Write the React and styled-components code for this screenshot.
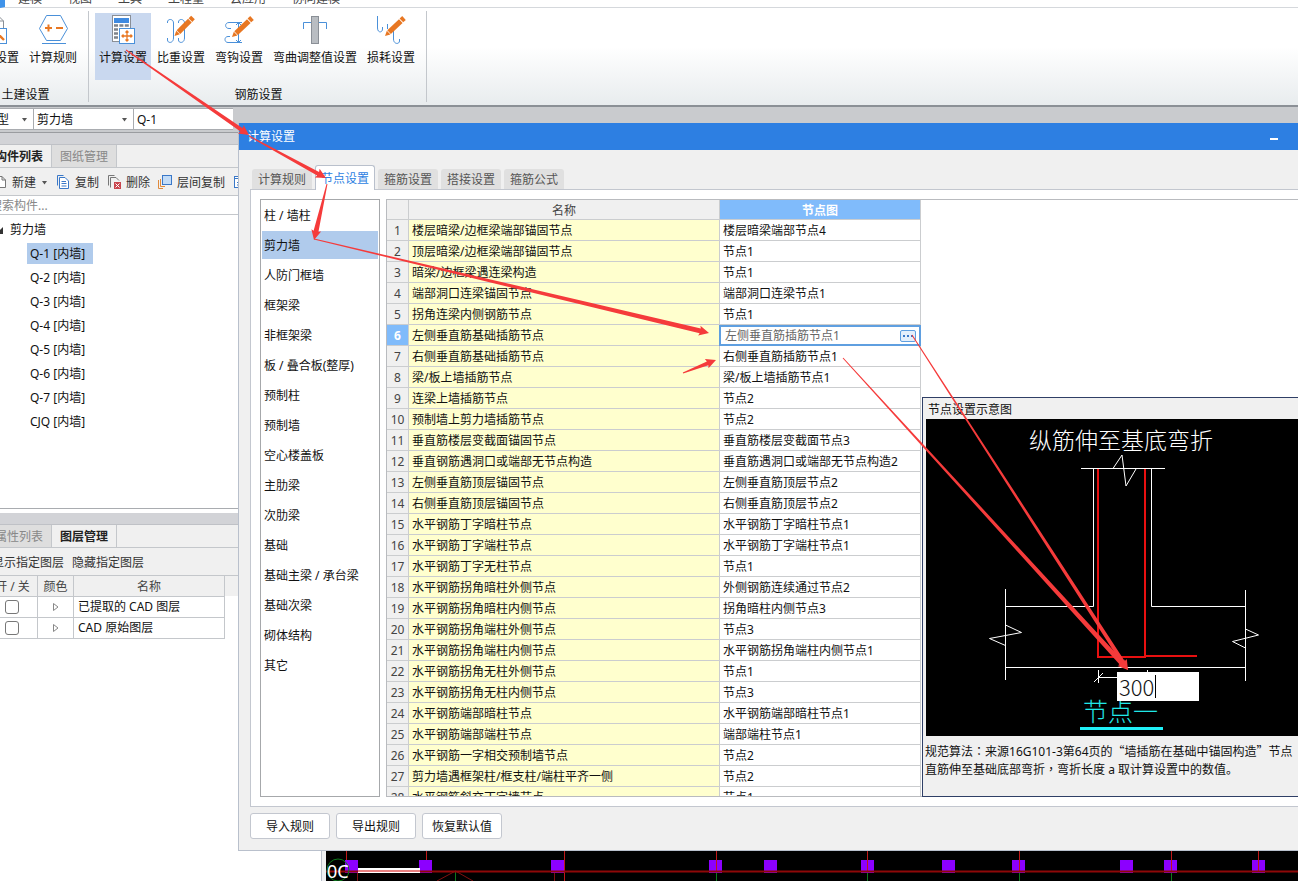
import React, { useState } from 'react';
import styled, { createGlobalStyle, css } from 'styled-components';


const sans = '"Noto Sans", "Noto Sans CJK SC", sans-serif';

const menus = ['建模', '视图', '工具', '工程量', '云应用', '协同建模'];

const walls = ['Q-1 [内墙]', 'Q-2 [内墙]', 'Q-3 [内墙]', 'Q-4 [内墙]', 'Q-5 [内墙]', 'Q-6 [内墙]', 'Q-7 [内墙]', 'CJQ [内墙]'];

const layers = ['已提取的 CAD 图层', 'CAD 原始图层'];

const dialogTabs = ['计算规则', '节点设置', '箍筋设置', '搭接设置', '箍筋公式'];

const categories = [
    '柱 / 墙柱', '剪力墙', '人防门框墙', '框架梁', '非框架梁', '板 / 叠合板(整厚)', '预制柱', '预制墙',
    '空心楼盖板', '主肋梁', '次肋梁', '基础', '基础主梁 / 承台梁', '基础次梁', '砌体结构', '其它',
];

const nodes = [
    ['楼层暗梁/边框梁端部锚固节点', '楼层暗梁端部节点4'],
    ['顶层暗梁/边框梁端部锚固节点', '节点1'],
    ['暗梁/边框梁遇连梁构造', '节点1'],
    ['端部洞口连梁锚固节点', '端部洞口连梁节点1'],
    ['拐角连梁内侧钢筋节点', '节点1'],
    ['左侧垂直筋基础插筋节点', '左侧垂直筋插筋节点1'],
    ['右侧垂直筋基础插筋节点', '右侧垂直筋插筋节点1'],
    ['梁/板上墙插筋节点', '梁/板上墙插筋节点1'],
    ['连梁上墙插筋节点', '节点2'],
    ['预制墙上剪力墙插筋节点', '节点2'],
    ['垂直筋楼层变截面锚固节点', '垂直筋楼层变截面节点3'],
    ['垂直钢筋遇洞口或端部无节点构造', '垂直筋遇洞口或端部无节点构造2'],
    ['左侧垂直筋顶层锚固节点', '左侧垂直筋顶层节点2'],
    ['右侧垂直筋顶层锚固节点', '右侧垂直筋顶层节点2'],
    ['水平钢筋丁字暗柱节点', '水平钢筋丁字暗柱节点1'],
    ['水平钢筋丁字端柱节点', '水平钢筋丁字端柱节点1'],
    ['水平钢筋丁字无柱节点', '节点1'],
    ['水平钢筋拐角暗柱外侧节点', '外侧钢筋连续通过节点2'],
    ['水平钢筋拐角暗柱内侧节点', '拐角暗柱内侧节点3'],
    ['水平钢筋拐角端柱外侧节点', '节点3'],
    ['水平钢筋拐角端柱内侧节点', '水平钢筋拐角端柱内侧节点1'],
    ['水平钢筋拐角无柱外侧节点', '节点1'],
    ['水平钢筋拐角无柱内侧节点', '节点3'],
    ['水平钢筋端部暗柱节点', '水平钢筋端部暗柱节点1'],
    ['水平钢筋端部端柱节点', '端部端柱节点1'],
    ['水平钢筋一字相交预制墙节点', '节点2'],
    ['剪力墙遇框架柱/框支柱/端柱平齐一侧', '节点2'],
    ['水平钢筋斜交丁字墙节点', '节点1'],
];

// tail x, tail y, tip x, tip y, shaft width at the neck
const arrows = [
    [126, 50, 249, 135, 4],
    [249, 136, 326, 178, 4],
    [327, 184, 314, 240, 5],
    [314, 239, 709, 333, 5],
    [683, 373, 716, 360, 4],
    [843, 358, 1128, 670, 5],
    [912, 335, 1128, 670, 4],
];


/* ---------- icons ---------- */

const Pencil = ({ x1, y1, x2, y2 }) => {
    const len = Math.hypot(x2 - x1, y2 - y1);
    const angle = Math.atan2(y2 - y1, x2 - x1) * 180 / Math.PI;
    return (
        <g transform={`translate(${x1} ${y1}) rotate(${angle})`} fill="#e87722">
            <path d="M0 0L5 -2.6V2.6Z" />
            <rect x="5.6" y="-2.6" width={len - 10} height="5.2" />
            <rect x={len - 3.6} y="-2.6" width="3.6" height="5.2" />
        </g>
    );
}

const ribbonIcons = {
    civil: (
        <>
            <path d="M6 1.5H19L24.500 7V15" stroke="#8a8f96" />
            <path d="M19 1.500V7H24.500" stroke="#8a8f96" />
            <rect x="12.500" y="14.500" width="15" height="15" fill="#fff" stroke="#4a90d9" />
            <path d="M18 19L25 26" stroke="#e87722" strokeWidth="2.400" />
        </>
    ),
    rule: (
        <>
            <path d="M2.500 14.500L9.500 1.500H23.500L30.500 14.500L23.500 26.500H9.500Z" stroke="#4a90d9" fill="#fff" />
            <path d="M5 29.500H29" stroke="#4a90d9" />
            <path d="M8 14H15M11.500 10.500V17.500M19 14H26" stroke="#e87722" strokeWidth="2" />
        </>
    ),
    calc: (
        <>
            <rect x="5.500" y="1.500" width="18" height="26" fill="#fff" stroke="#8a8f96" />
            <rect x="7" y="4" width="15" height="5" fill="#3f8ae0" />
            <path d="M7 11.500H22M7 15.500H22M7 19.500H12M7 23.500H12" stroke="#7d838b" strokeWidth="2.400" strokeDasharray="4 1.400" />
            <rect x="12.500" y="14.500" width="15" height="15" fill="#fff" stroke="#4a90d9" />
            <path d="M20 17V27M15 22H25M18.500 18.500L20 17L21.500 18.500M18.500 25.500L20 27L21.500 25.500M16.500 20.500L15 22L16.500 23.500M23.500 20.500L25 22L23.500 23.500" stroke="#e87722" strokeWidth="1.300" />
        </>
    ),
    weight: (
        <>
            <path d="M2.500 9V8C2.500 4.500 8.500 4.500 8.500 9V24C8.500 29.500 2.500 29.500 2.500 26V24" stroke="#4a90d9" />
            <path d="M13.500 9V8C13.500 4.500 19.500 4.500 19.500 9V24C19.500 29.500 13.500 29.500 13.500 26V24" stroke="#4a90d9" />
            <Pencil x1={9.5} y1={22} x2={28} y2={3.5} />
        </>
    ),
    hook: (
        <>
            <path d="M19 8.500H6C1.500 8.500 1.500 14.500 6 14.500H8M19 28.500H5C1 28.500 1 22.500 5 22.500H7M15.500 8.500V28.500M13 11L15.500 8.500L18 11M13 26L15.500 28.500L18 26" stroke="#4a90d9" />
            <Pencil x1={9} y1={23} x2={29} y2={4} />
        </>
    ),
    bend: (
        <>
            <path d="M4.500 15V8.500H27.500V15" stroke="#4a90d9" />
            <rect x="12.500" y="2.500" width="7" height="27" fill="#b9bdc2" stroke="#8a8f96" />
        </>
    ),
    loss: (
        <>
            <path d="M2.500 2V14C2.500 19 7.500 19 7.500 15V13M12.500 10V15M18.500 15V25C18.500 30.500 24.500 30.500 24.500 27V25" stroke="#4a90d9" />
            <Pencil x1={10} y1={22} x2={29} y2={4} />
        </>
    ),
};

const toolIcons = {
    create: <path d="M2.500 1.500H9L12.500 5V12.500H2.500ZM9 1.500V5H12.500" stroke="#777" fill="#fff" />,
    copy: (
        <>
            <path d="M1.500 10.500V.5H7.500" stroke="#3a78c8" />
            <path d="M3.500 2.500H9L12.500 6V13.500H3.500Z" stroke="#3a78c8" fill="#fff" />
            <path d="M5.500 6.500H10M5.500 8.500H10.500M5.500 11H10.500" stroke="#3a78c8" />
        </>
    ),
    remove: (
        <>
            <path d="M1.500 10.500V.5H7.500" stroke="#777" />
            <path d="M3.500 12.500V2.500H9L12 5.500" stroke="#777" />
            <rect x="7" y="7" width="7" height="7" fill="#c9444d" />
            <path d="M8.500 8.500L12.500 12.500M12.500 8.500L8.500 12.500" stroke="#fff" />
        </>
    ),
    floors: (
        <>
            <path d="M.5 5V13.500H5M2.500 4V11.500H7" stroke="#e08a3c" />
            <rect x="4.500" y=".5" width="9" height="9" fill="#c3dcf7" stroke="#3a78c8" />
        </>
    ),
    list: (
        <>
            <rect x="1.500" y="1.500" width="11" height="11" fill="#fff" stroke="#3a78c8" />
            <path d="M1 3.500H13M4 7.500H11M4 10H11" stroke="#3a78c8" />
        </>
    ),
};

const RibbonButton = ({ icon, label, active }) => (
    <RibbonItem type="button" $active={active}>
        <svg width="32" height="32" viewBox="0 0 32 32" fill="none" aria-hidden="true">{ribbonIcons[icon]}</svg>
        {label}
    </RibbonItem>
);

const ToolButton = ({ icon, label, caret }) => (
    <Tool type="button" aria-label={label || '更多'}>
        <svg width="14" height="14" viewBox="0 0 14 14" fill="none" aria-hidden="true">{toolIcons[icon]}</svg>
        {label}
        {caret && <Caret />}
    </Tool>
);

const Caret = () => (
    <svg width="7" height="4" viewBox="0 0 7 4" aria-hidden="true"><path d="M1 0H6L3.500 3.500Z" fill="#555" /></svg>
);


/* ---------- left side ---------- */

const Sidebar = () => (
    <SidebarContainer>
        <Splitter />
        <PanelTabs>
            <PanelTab type="button" $active>构件列表</PanelTab>
            <PanelTab type="button">图纸管理</PanelTab>
        </PanelTabs>
        <Toolbar>
            <ToolButton icon="create" label="新建" caret />
            <ToolButton icon="copy" label="复制" />
            <ToolButton icon="remove" label="删除" />
            <ToolButton icon="floors" label="层间复制" />
            <ToolButton icon="list" />
        </Toolbar>
        <SearchBox>
            <input aria-label="搜索构件" placeholder="搜索构件..." />
        </SearchBox>
        <Tree>
            <TreeRoot>
                <svg width="7" height="7" viewBox="0 0 7 7" aria-hidden="true"><path d="M7 0V7H0Z" fill="#333" /></svg>
                剪力墙
            </TreeRoot>
            {walls.map((wall, i) => (
                <TreeItem key={wall}><TreeLabel $active={i === 0}>{wall}</TreeLabel></TreeItem>
            ))}
        </Tree>
        <Splitter />
        <PanelTabs>
            <PanelTab type="button">属性列表</PanelTab>
            <PanelTab type="button" $active>图层管理</PanelTab>
        </PanelTabs>
        <LayerTools>
            <button type="button">显示指定图层</button>
            <button type="button">隐藏指定图层</button>
        </LayerTools>
        <LayerArea>
            <LayerTable>
                <thead>
                    <tr><th>开 / 关</th><th>颜色</th><th>名称</th></tr>
                </thead>
                <tbody>
                    {layers.map(layer => (
                        <tr key={layer}>
                            <td><CheckBox type="checkbox" aria-label={layer} /></td>
                            <td>
                                <svg width="6" height="8" viewBox="0 0 6 8" aria-hidden="true"><path d="M.5 .5V7.500L5 4Z" fill="none" stroke="#888" /></svg>
                            </td>
                            <td>{layer}</td>
                        </tr>
                    ))}
                </tbody>
            </LayerTable>
        </LayerArea>
    </SidebarContainer>
);


/* ---------- plan under the dialog ---------- */

const CadCanvas = () => (
    <Canvas>
        <svg width="972" height="30" fill="none" aria-hidden="true">
            <path d="M20.500 0V20M100.500 0V20M238.500 0V30" stroke="#c01818" />
            <path d="M390.500 22V30M541.500 22V30M693.500 22V30M845.500 22V30M129.500 20V30" stroke="#0d7a1c" />
            <path d="M111 30L129.500 20L147 30M31.500 20V30M228.500 20V30" stroke="#801010" />
            {[26, 100, 232, 390, 445, 542, 623, 693, 801, 845, 933].map(x => (
                <rect key={x} x={x - 7} y="9" width="13" height="13" fill="#8c00ff" />
            ))}
            <path d="M390.500 0V20M541.500 0V20M693.500 0V20M845.500 0V20M932.500 0V20" stroke="#c01818" />
            <path d="M0 20.500H972" stroke="#8f0808" strokeWidth="2" />
            <rect x="32" y="17" width="62" height="5" fill="#fff" />
            <rect x="32" y="19" width="62" height="2" fill="#e88080" />
            <circle cx="12" cy="19" r="11" stroke="#0d7a1c" />
            <text x="1" y="27" fontSize="18" fill="#fff">0C</text>
        </svg>
    </Canvas>
);


/* ---------- dialog ---------- */

const NodePreview = () => {
    const [length, setLength] = useState('300');

    return (
        <Preview>
            <PreviewTitle>节点设置示意图</PreviewTitle>
            <Drawing>
                <svg width="100%" height="317" fill="none" aria-hidden="true">
                    <text x="103" y="30" fontSize="23" fill="#fff">纵筋伸至基底弯折</text>
                    <g stroke="#fff">
                        <path d="M155 49.500H239" />
                        <path d="M187 49.500L196 36L200 67L210 50" />
                        <path d="M167.500 49V187.500H79.500M225.500 49V187.500H319.500" />
                        <path d="M79.500 170V261M319.500 171V262M79.500 248.500H319.500" />
                        <path d="M79.500 206L95.500 213.500L63.500 219.500L79.500 226.500" />
                        <path d="M319.500 210L332.500 216L306.500 222.500L319.500 229" />
                        <path d="M172.500 251V264M172 258.500H221M168 263L177 254M221.500 251V264" />
                    </g>
                    <path d="M172 50V238H219V50M219 237H271" stroke="#e81010" strokeWidth="2" />
                    <text x="157" y="302" fontSize="25" fill="#20e8e8">节点一</text>
                    <rect x="154" y="308" width="83" height="3" fill="#20f0f8" />
                </svg>
                <LengthInput aria-label="弯折长度" value={length} onChange={e => setLength(e.target.value)} />
                <TextCursor />
            </Drawing>
            <Note>
                规范算法<Mark>：</Mark>来源16G101-3第64页的<Mark>“</Mark>墙插筋在基础中锚固构造<Mark>”</Mark>节点
                <br />
                直筋伸至基础底部弯折<Mark>，</Mark>弯折长度 a 取计算设置中的数值。
            </Note>
        </Preview>
    );
}

const SettingsDialog = () => {
    const [tab, setTab] = useState('节点设置');
    const [category, setCategory] = useState('剪力墙');
    const currentRow = 5;

    return (
        <Dialog role="dialog" aria-label="计算设置">
            <TitleBar>
                计算设置
                <MinimizeButton type="button" aria-label="最小化" />
            </TitleBar>
            <DialogBody>
                <DialogTabs>
                    {dialogTabs.map(name => (
                        <DialogTab key={name} type="button" $active={name === tab} onClick={() => setTab(name)}>{name}</DialogTab>
                    ))}
                </DialogTabs>
                <TabPanel>
                    <CategoryList>
                        {categories.map(name => (
                            <CategoryItem key={name} type="button" $active={name === category} onClick={() => setCategory(name)}>{name}</CategoryItem>
                        ))}
                    </CategoryList>
                    <GridArea>
                        <GridScroll>
                            <NodeTable>
                                <thead>
                                    <tr><th /><th>名称</th><th className="current">节点图</th></tr>
                                </thead>
                                <tbody>
                                    {nodes.map(([name, node], i) => (
                                        <tr key={name}>
                                            <RowNumber scope="row" $active={i === currentRow}>{i + 1}</RowNumber>
                                            <NameCell>{name}</NameCell>
                                            {i === currentRow ? (
                                                <EditCell>
                                                    <Editor>
                                                        <input aria-label={name} defaultValue={node} />
                                                        <button type="button" aria-label="选择节点图">
                                                            <svg width="10" height="2" viewBox="0 0 10 2" fill="#3a78c8" aria-hidden="true">
                                                                <rect width="2" height="2" /><rect x="4" width="2" height="2" /><rect x="8" width="2" height="2" />
                                                            </svg>
                                                        </button>
                                                    </Editor>
                                                </EditCell>
                                            ) : (
                                                <td>{node}</td>
                                            )}
                                        </tr>
                                    ))}
                                </tbody>
                            </NodeTable>
                        </GridScroll>
                        <NodePreview />
                    </GridArea>
                </TabPanel>
                <DialogFooter>
                    <FooterButton type="button">导入规则</FooterButton>
                    <FooterButton type="button">导出规则</FooterButton>
                    <FooterButton type="button">恢复默认值</FooterButton>
                </DialogFooter>
            </DialogBody>
        </Dialog>
    );
}

// a shaft that widens towards the neck, then the head
const arrowPoints = ([x1, y1, x2, y2, w]) => {
    const len = Math.hypot(x2 - x1, y2 - y1);
    const ux = (x2 - x1) / len;
    const uy = (y2 - y1) / len;
    const at = (along, side) => `${x1 + ux * along - uy * side},${y1 + uy * along + ux * side}`;
    const neck = len - 9;
    return [
        at(0, 0.5), at(neck, w / 2), at(neck - 1, 5), at(len, 0), at(neck - 1, -5), at(neck, -w / 2), at(0, -0.5),
    ].join(' ');
}


const App = () => (
    <AppContainer>
        <GlobalStyle />
        <MenuBar>
            {menus.map(menu => <span key={menu}>{menu}</span>)}
        </MenuBar>
        <Ribbon>
            <RibbonGroup $clipped>
                <RibbonRow>
                    <RibbonButton icon="civil" label="土建设置" />
                    <RibbonButton icon="rule" label="计算规则" />
                </RibbonRow>
                <GroupLabel>土建设置</GroupLabel>
            </RibbonGroup>
            <RibbonGroup>
                <RibbonRow>
                    <RibbonButton icon="calc" label="计算设置" active />
                    <RibbonButton icon="weight" label="比重设置" />
                    <RibbonButton icon="hook" label="弯钩设置" />
                    <RibbonButton icon="bend" label="弯曲调整值设置" />
                    <RibbonButton icon="loss" label="损耗设置" />
                </RibbonRow>
                <GroupLabel>钢筋设置</GroupLabel>
            </RibbonGroup>
        </Ribbon>
        <SelectorBar>
            <Selector $clipped>
                <select aria-label="构件类型"><option>类型</option></select>
                <Caret />
            </Selector>
            <Selector>
                <select aria-label="构件"><option>剪力墙</option></select>
                <Caret />
            </Selector>
            <Selector>
                <input aria-label="名称" defaultValue="Q-1" />
            </Selector>
        </SelectorBar>
        <Workspace>
            <Sidebar />
            <CadCanvas />
        </Workspace>
        <SettingsDialog />
        <Annotations aria-hidden="true">
            {arrows.map(arrow => <polygon key={arrow.join()} points={arrowPoints(arrow)} fill="#f53b3b" />)}
        </Annotations>
    </AppContainer>
);
export default App;


const GlobalStyle = createGlobalStyle`
    * {
        box-sizing: border-box;
    }

    body {
        margin: 0;
        overflow: hidden;
    }

    body, button, input, select {
        font-family: ${sans};
        font-size: 12px;
        line-height: 16px;
        color: #111;
    }

    button, input {
        border: none;
        background: none;
        padding: 0;
        outline: none;
    }
`

const AppContainer = styled.div`
    position: relative;
    display: flex;
    flex-direction: column;
    height: 100vh;
    overflow: hidden;
    background: #c9cbce;
`

const MenuBar = styled.div`
    display: flex;
    flex: none;
    align-items: flex-end;
    gap: 26px;
    height: 8px;
    padding-left: 13px;
    overflow: hidden;
    border-left: 5px solid #3f93ea;
    border-bottom: 1px solid #d5d8dc;
    background: #fff;
    color: #444;
`

const Ribbon = styled.div`
    display: flex;
    flex: none;
    height: 99px;
    border-bottom: 2px solid #8b9096;
    background: linear-gradient(#fff 40%, #e8ecee);
`

const RibbonGroup = styled.div`
    display: flex;
    flex-direction: column;
    margin: 3px 0;
    padding: 2px 7px 0 6px;
    border-right: 1px solid #c3c7cc;

    ${props => props.$clipped && css`
        margin-left: -39px;
    `}
`

const RibbonRow = styled.div`
    display: flex;
    gap: 2px;
`

const RibbonItem = styled.button`
    display: flex;
    flex-direction: column;
    align-items: center;
    gap: 4px;
    height: 67px;
    padding: 1px 4px 0;
    white-space: nowrap;
    background: ${props => props.$active ? '#c9d8ef' : 'none'};
`

const GroupLabel = styled.div`
    margin-top: 7px;
    padding-left: 3px;
    text-align: center;
`

const SelectorBar = styled.div`
    display: flex;
    flex: none;
    height: 26px;
    padding: 1px 0 2px;
    border-bottom: 1px solid #9a9ca0;
`

const Selector = styled.div`
    display: flex;
    align-items: center;
    width: 100px;
    padding: 1px 5px 0 3px;
    border: 1px solid #a9acb0;
    border-right: none;
    background: #fff;

    select, input {
        flex: 1;
        width: 0;
        padding: 0;
        border: none;
        outline: none;
        background: none;
        appearance: none;
    }

    ${props => props.$clipped && css`
        width: 52px;
        margin-left: -19px;
    `}
`

const Workspace = styled.div`
    display: flex;
    flex: 1;
    min-height: 0;
`

const SidebarContainer = styled.div`
    display: flex;
    flex-direction: column;
    width: 322px;
    overflow: hidden;
    border-right: 1px solid #b9bfca;
    background: #fff;
`

const Splitter = styled.div`
    flex: none;
    height: 12px;
    border-bottom: 1px solid #bfc1c6;
    background: #d2d3d7;
`

const PanelTabs = styled.div`
    display: flex;
    flex: none;
    height: 23px;
    margin-left: -13px;
    border-bottom: 1px solid #c4c7cb;
    background: #f0f0f0;
`

const PanelTab = styled.button`
    width: 65px;
    padding-top: 2px;
    border-right: 1px solid #c4c7cb;
    background: ${props => props.$active ? '#f0f0f0' : '#dedede'};
    color: ${props => props.$active ? '#222' : '#888'};
    font-weight: ${props => props.$active ? 'bold' : 'normal'};
`

const Toolbar = styled.div`
    display: flex;
    flex: none;
    align-items: center;
    gap: 8px;
    height: 28px;
    margin-left: -7px;
    padding-top: 2px;
    border-bottom: 1px solid #c4c7cb;
    background: #f0f0f0;
`

const Tool = styled.button`
    display: flex;
    align-items: center;
    gap: 5px;
    color: #333;

    svg:first-child {
        margin-bottom: 2px;
    }
`

const SearchBox = styled.div`
    flex: none;
    height: 19px;
    margin-left: -10px;
    border-bottom: 1px solid #c4c7cb;

    input {
        display: block;
        width: 100%;
        height: 18px;
    }

    input::placeholder {
        color: #888;
    }
`

const Tree = styled.ul`
    flex: none;
    height: 294px;
    margin: 0 0 4px;
    padding: 2px 0 0;
    list-style: none;
    border-bottom: 1px solid #a9acb0;
`

const TreeRoot = styled.li`
    display: flex;
    align-items: center;
    gap: 7px;
    height: 24px;
    margin-left: -4px;
    padding-top: 2px;
`

const TreeItem = styled.li`
    display: flex;
    align-items: center;
    height: 24px;
    padding-left: 27px;
`

const TreeLabel = styled.span`
    min-width: 66px;
    padding: 0 4px 0 3px;
    line-height: 21px;
    background: ${props => props.$active ? '#b0cbec' : 'none'};
`

const LayerTools = styled.div`
    display: flex;
    flex: none;
    align-items: center;
    gap: 8px;
    height: 28px;
    margin-left: -8px;
    padding-top: 2px;
    border-bottom: 1px solid #c4c7cb;
    background: #f0f0f0;

    button {
        color: #333;
    }
`

const LayerArea = styled.div`
    background: linear-gradient(#f0f0f0 20px, #fff 20px);
`

const LayerTable = styled.table`
    width: 237px;
    margin-left: -12px;
    table-layout: fixed;
    border-collapse: separate;
    border-spacing: 0;

    th, td {
        height: 21px;
        padding: 0;
        border-right: 1px solid #c4c7cb;
        border-bottom: 1px solid #c4c7cb;
        line-height: 16px;
        text-align: center;
        white-space: nowrap;
    }

    th {
        padding-top: 2px;
        color: #444;
        font-weight: normal;
    }

    th:nth-child(1) {
        width: 50px;
    }

    th:nth-child(2) {
        width: 36px;
    }

    td:last-child {
        padding-left: 4px;
        text-align: left;
    }
`

const CheckBox = styled.input`
    display: block;
    width: 14px;
    height: 14px;
    margin: 0 0 0 17px;
    appearance: none;
    border: 1px solid #777;
    border-radius: 3px;
    background: #fff;
`

const Canvas = styled.div`
    display: flex;
    flex: 1;
    align-items: flex-end;
    overflow: hidden;
    border-left: 4px solid #eef0f2;
    background: #000;

    svg {
        flex: none;
    }
`

const Dialog = styled.div`
    position: absolute;
    top: 123px;
    right: 0;
    bottom: 30px;
    left: 238px;
    display: flex;
    flex-direction: column;
    border-left: 1px solid #b9c0cc;
    border-bottom: 1px solid #b9c0cc;
    background: #f0f0f0;
`

const TitleBar = styled.div`
    display: flex;
    flex: none;
    align-items: center;
    justify-content: space-between;
    height: 27px;
    padding: 0 20px 0 8px;
    background: #2d7fe2;
    color: #fff;
`

const MinimizeButton = styled.button`
    width: 8px;
    height: 6px;
    border-bottom: 2px solid #fff;
`

const DialogBody = styled.div`
    display: flex;
    flex: 1;
    flex-direction: column;
    min-height: 0;
    padding: 15px 0 11px 11px;
`

const DialogTabs = styled.div`
    display: flex;
    flex: none;
    align-items: flex-end;
    gap: 3px;
    height: 24px;
    padding-left: 2px;
`

const DialogTab = styled.button`
    width: 60px;
    height: 20px;
    padding-top: 2px;
    border-radius: 3px 3px 0 0;
    background: #e0e0e0;
    color: #555;

    ${props => props.$active && css`
        z-index: 1;
        height: 25px;
        margin-bottom: -1px;
        border: 1px solid #b9c0cc;
        border-bottom: none;
        background: #fff;
        color: #2d7fe2;
    `}
`

const TabPanel = styled.div`
    display: flex;
    flex: 1;
    gap: 6px;
    min-height: 0;
    padding: 9px 0;
    padding-left: 9px;
    border: 1px solid #c3c7cf;
    border-right: none;
    background: #fff;
`

const CategoryList = styled.div`
    display: flex;
    flex: none;
    flex-direction: column;
    gap: 2px;
    width: 120px;
    padding: 1px;
    overflow: hidden;
    border: 1px solid #a6a8ab;
`

const CategoryItem = styled.button`
    flex: none;
    height: 28px;
    padding: 2px 0 0 2px;
    text-align: left;
    white-space: nowrap;
    background: ${props => props.$active ? '#b0cbec' : 'none'};
`

const GridArea = styled.div`
    display: flex;
    flex: 1;
    gap: 1px;
    min-width: 0;
    border: 1px solid #b9bbbf;
    border-right: none;
`

const GridScroll = styled.div`
    flex: none;
    width: 534px;
    overflow: hidden;
`

const NodeTable = styled.table`
    width: 534px;
    table-layout: fixed;
    border-collapse: separate;
    border-spacing: 0;

    th, td {
        height: 21px;
        padding: 2px 0 0 3px;
        border-right: 1px solid #cbcdcf;
        border-bottom: 1px solid #cbcdcf;
        line-height: 16px;
        text-align: left;
        white-space: nowrap;
    }

    thead th {
        height: 20px;
        padding: 2px 0 0;
        background: #f0f0f0;
        color: #444;
        font-weight: normal;
        text-align: center;
    }

    thead th:first-child {
        width: 22px;
    }

    thead th:last-child {
        width: 201px;
    }

    thead th.current {
        background: #80bbfb;
        color: #fff;
        font-weight: bold;
    }
`

const RowNumber = styled.th`
    && {
        padding: 2px 0 0;
        text-align: center;
        background: ${props => props.$active ? '#80bbfb' : '#f0f0f0'};
        color: ${props => props.$active ? '#fff' : '#444'};
        font-weight: ${props => props.$active ? 'bold' : 'normal'};
    }
`

const NameCell = styled.td`
    background: #ffffce;
`

const EditCell = styled.td`
    && {
        padding: 0;
        border: none;
    }
`

const Editor = styled.div`
    display: flex;
    align-items: center;
    height: 21px;
    margin-left: -1px;
    padding: 0 3px 0 4px;
    border: 2px solid #5f9fe0;

    input {
        flex: 1;
        width: 0;
        height: 16px;
        color: #666;
    }

    button {
        display: flex;
        align-items: center;
        justify-content: center;
        width: 16px;
        height: 12px;
        border: 1px solid #5f9fe0;
        border-radius: 2px;
        background: #e4effb;
    }
`

const Preview = styled.div`
    flex: 1;
    align-self: flex-end;
    min-width: 0;
    margin-bottom: -1px;
    padding-left: 3px;
    border: 1px solid #2f3f66;
    border-right: none;
    background: #f0f0f0;
`

const PreviewTitle = styled.div`
    height: 21px;
    padding-left: 2px;
    line-height: 24px;
`

const Drawing = styled.div`
    position: relative;
    height: 317px;
    background: #000;
    font-family: "Noto Sans CJK SC", sans-serif;
    font-weight: 300;

    svg {
        display: block;
    }
`

const LengthInput = styled.input`
    position: absolute;
    top: 253px;
    left: 191px;
    width: 82px;
    height: 29px;
    padding-left: 2px;
    background: #fff;
    font-family: "Noto Sans CJK SC", sans-serif;
    font-size: 22px;
    font-weight: 300;
    line-height: 29px;
`

const TextCursor = styled.span`
    position: absolute;
    top: 256px;
    left: 229px;
    width: 1px;
    height: 23px;
    background: #000;
`

const Note = styled.p`
    height: 60px;
    margin: 0 0 0 -1px;
    padding-top: 7px;
    overflow: hidden;
    line-height: 18px;
    white-space: nowrap;
`

// full-width punctuation, centred in its cell
const Mark = styled.span`
    font-family: "Noto Sans CJK TC", sans-serif;
    line-height: 1;
`

const DialogFooter = styled.div`
    display: flex;
    flex: none;
    gap: 6px;
    padding-top: 6px;
`

const FooterButton = styled.button`
    width: 80px;
    height: 26px;
    padding-top: 2px;
    border: 1px solid #c3c7cf;
    border-radius: 3px;
    background: #fff;
`

// drawn over the dialog and its raised tab
const Annotations = styled.svg`
    position: absolute;
    top: 0;
    left: 0;
    z-index: 2;
    width: 100%;
    height: 100%;
    pointer-events: none;
`
